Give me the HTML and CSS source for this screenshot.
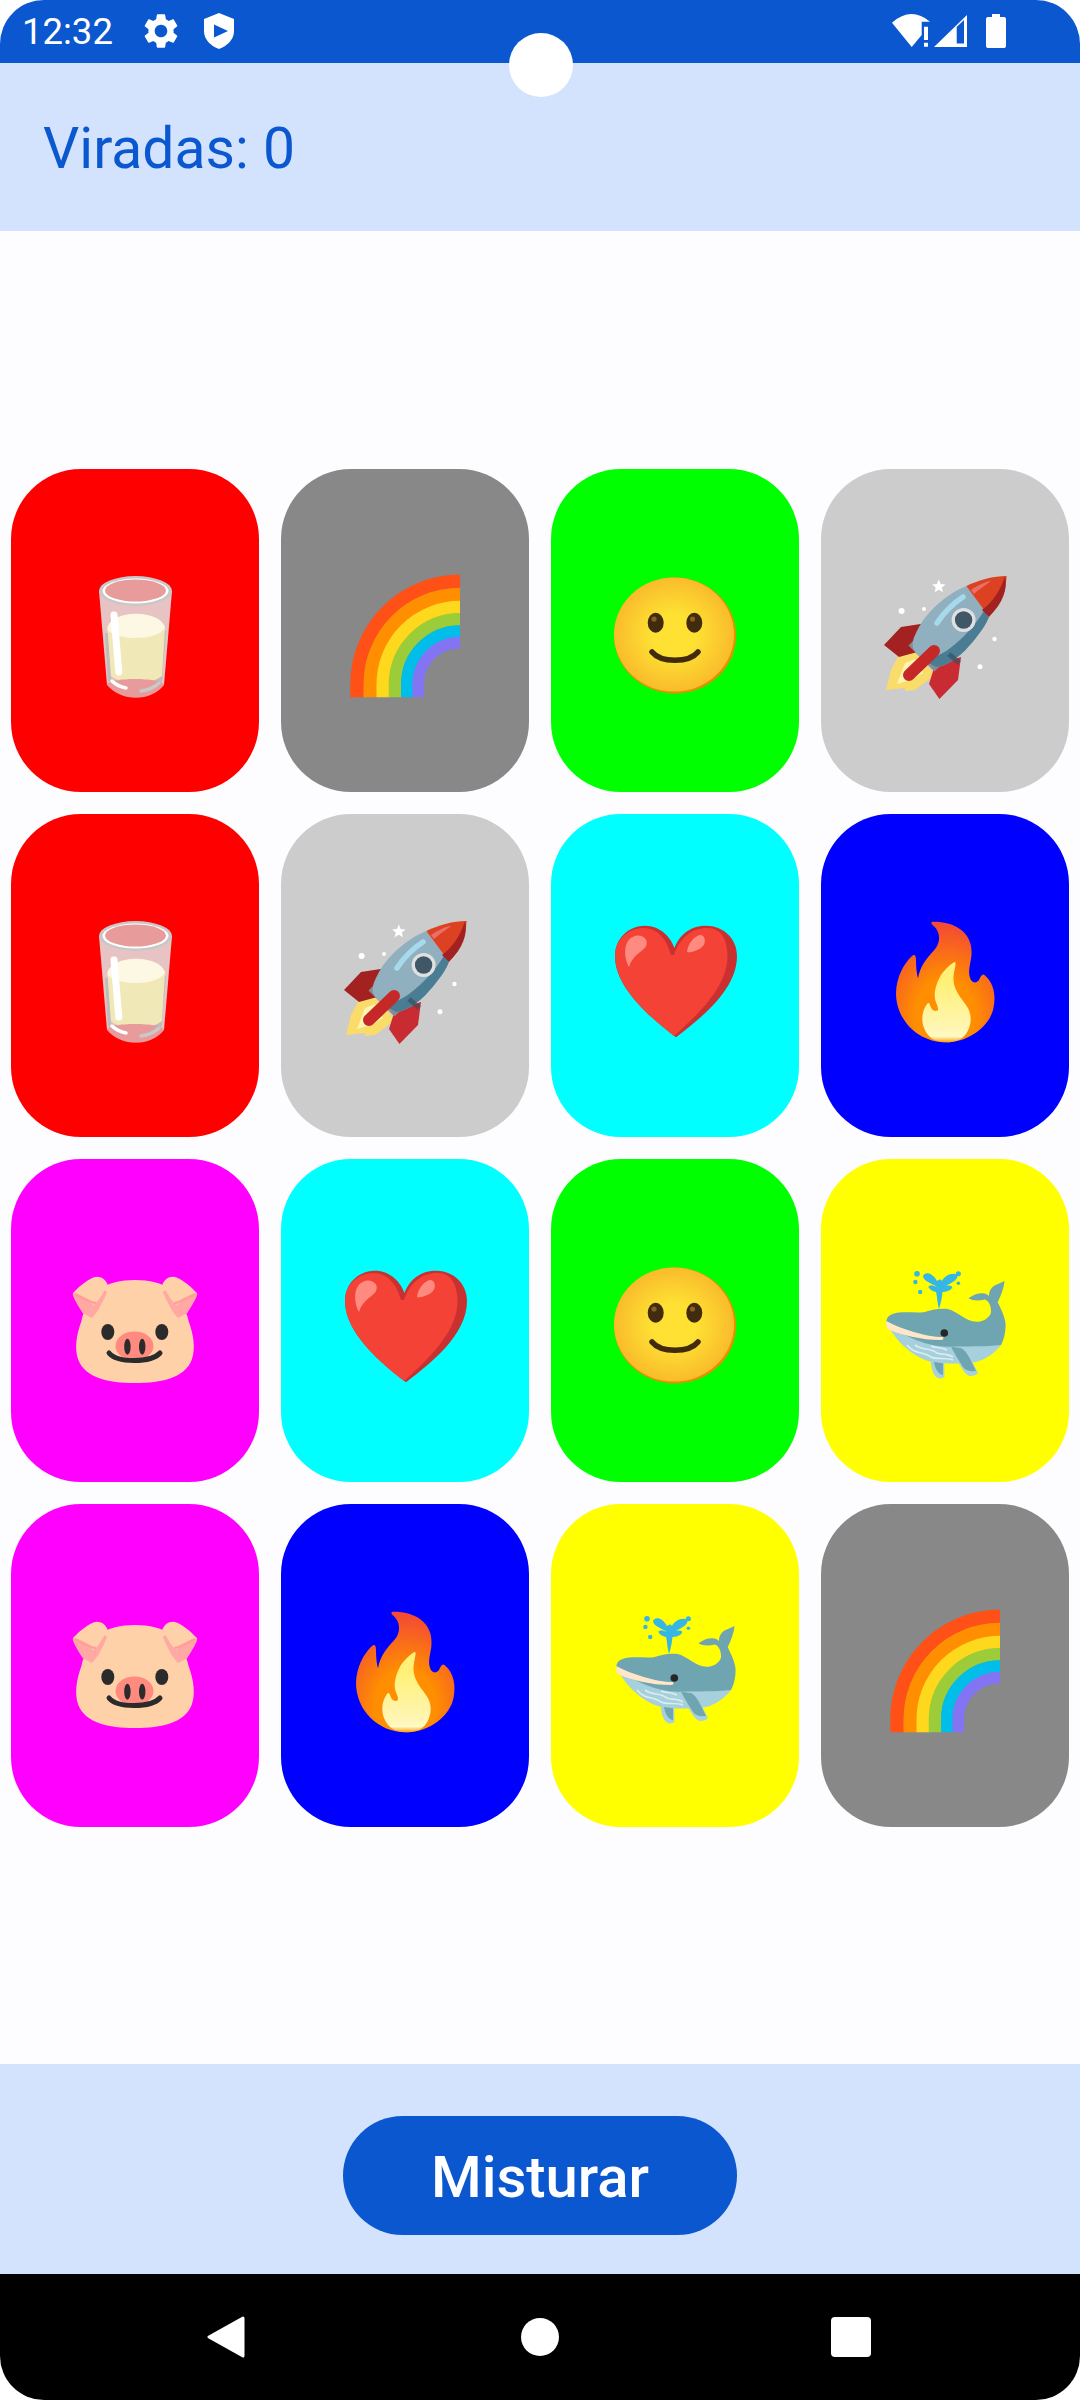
FILE: index.html
```html
<!DOCTYPE html>
<html lang="pt">

<head>
    <meta charset="UTF-8">
    <meta name="viewport" content="width=device-width, initial-scale=1.0">
    <title>Jogo da Memória</title>
    <link rel="stylesheet" href="styles.css">
</head>

<body>
    <div class="screen">
        <div class="statusBar">
            <span class="clock">12:32</span>
            <svg class="gear" viewBox="0 0 24 24"><path fill="#fff" d="M19.14 12.94c.04-.3.06-.61.06-.94 0-.32-.02-.64-.07-.94l2.03-1.58c.18-.14.23-.41.12-.61l-1.92-3.32c-.12-.22-.37-.29-.59-.22l-2.39.96c-.5-.38-1.03-.7-1.62-.94l-.36-2.54c-.04-.24-.24-.41-.48-.41h-3.84c-.24 0-.43.17-.47.41l-.36 2.54c-.59.24-1.13.57-1.62.94l-2.39-.96c-.22-.08-.47 0-.59.22L2.74 8.87c-.12.21-.08.47.12.61l2.03 1.58c-.05.3-.09.63-.09.94s.02.64.07.94l-2.03 1.58c-.18.14-.23.41-.12.61l1.92 3.32c.12.22.37.29.59.22l2.39-.96c.5.38 1.03.7 1.62.94l.36 2.54c.05.24.24.41.48.41h3.84c.24 0 .44-.17.47-.41l.36-2.54c.59-.24 1.13-.56 1.62-.94l2.39.96c.22.08.47 0 .59-.22l1.92-3.32c.12-.22.07-.47-.12-.61l-2.01-1.58zM12 15.6c-1.98 0-3.6-1.62-3.6-3.6s1.62-3.6 3.6-3.6 3.6 1.62 3.6 3.6-1.62 3.6-3.6 3.6z"/></svg>
            <svg class="shield" viewBox="0 0 30 36"><path fill="#fff" fill-rule="evenodd" d="M15 0 L30 6 V18 C30 27 23 33 15 36 C7 33 0 27 0 18 V6Z M10 11.5 V24.5 L24 18Z"/></svg>
            <div class="statusRight">
                <svg class="wifi" viewBox="0 0 38 33"><path fill="#fff" d="M19.7 33 L0 8.7 Q19 -8 38 7.7 H29.7 V21Z M32 12.7 H36 V26 H32Z M32 28.7 H36 V32.7 H32Z"/></svg>
                <svg class="signal" viewBox="0 0 33 32"><path fill="#fff" fill-rule="evenodd" d="M0 32 L33 0 V32Z M22.7 12 L30 5 V28.5 H22.7Z"/></svg>
                <svg class="battery" viewBox="0 0 20 34"><path fill="#fff" d="M6 0 H14 V3 H18 a2 2 0 0 1 2 2 V32 a2 2 0 0 1 -2 2 H2 a2 2 0 0 1 -2 -2 V5 a2 2 0 0 1 2 -2 H6Z"/></svg>
            </div>
        </div>

        <div class="camera"></div>

        <div class="topBar">Viradas: <span id="flips">0</span></div>

        <div class="board">
            <div class="card red"><svg class="emoji"><use href="#milk"/></svg></div>
            <div class="card gray"><svg class="emoji"><use href="#rainbow"/></svg></div>
            <div class="card green"><svg class="emoji"><use href="#smile"/></svg></div>
            <div class="card lightGray"><svg class="emoji"><use href="#rocket"/></svg></div>

            <div class="card red"><svg class="emoji"><use href="#milk"/></svg></div>
            <div class="card lightGray"><svg class="emoji"><use href="#rocket"/></svg></div>
            <div class="card cyan"><svg class="emoji"><use href="#heart"/></svg></div>
            <div class="card blue"><svg class="emoji"><use href="#fire"/></svg></div>

            <div class="card magenta"><svg class="emoji"><use href="#pig"/></svg></div>
            <div class="card cyan"><svg class="emoji"><use href="#heart"/></svg></div>
            <div class="card green"><svg class="emoji"><use href="#smile"/></svg></div>
            <div class="card yellow"><svg class="emoji"><use href="#whale"/></svg></div>

            <div class="card magenta"><svg class="emoji"><use href="#pig"/></svg></div>
            <div class="card blue"><svg class="emoji"><use href="#fire"/></svg></div>
            <div class="card yellow"><svg class="emoji"><use href="#whale"/></svg></div>
            <div class="card gray"><svg class="emoji"><use href="#rainbow"/></svg></div>
        </div>

        <div class="bottomBar">
            <button class="shuffle">Misturar</button>
        </div>

        <div class="navBar">
            <svg class="navBack" viewBox="0 0 38 42"><polygon fill="#fff" stroke="#fff" stroke-width="3" stroke-linejoin="round" points="36,2 2,21 36,40"/></svg>
            <div class="navHome"></div>
            <div class="navRecent"></div>
        </div>
    </div>

    <!-- emoji drawings, all on a 128 box -->
    <svg class="sprite">
        <defs>
            <radialGradient id="smileFill" cx="50%" cy="50%" r="52%">
                <stop offset="0.35" stop-color="#fee133"/>
                <stop offset="1" stop-color="#f9b92b"/>
            </radialGradient>
            <radialGradient id="fireFill" cx="50%" cy="78%" r="75%">
                <stop offset="0.4" stop-color="#ff8f00"/>
                <stop offset="1" stop-color="#f44b32"/>
            </radialGradient>
            <linearGradient id="fireInner" x1="0" y1="0" x2="0" y2="1">
                <stop offset="0.25" stop-color="#fff176"/>
                <stop offset="0.8" stop-color="#fff5b0"/>
                <stop offset="0.93" stop-color="#fff9c4"/>
                <stop offset="1" stop-color="#ff9800"/>
            </linearGradient>

            <symbol id="milk" viewBox="0 0 128 128">
                <path fill="#e8c3c3" d="M28 18 L36 112 H93 L101 18Z"/>
                <path fill="#bdbdbd" d="M34 60 L37 108 C48 116 80 116 91 108 L95 58 L92 58 L88 105 C78 112 50 112 40 105 L37 60Z"/>
                <path fill="#f1e8b8" d="M36.5 55 C40 38 90 38 94 55 L91 103 C80 112 50 112 40 103Z"/>
                <path fill="#fdf8e4" d="M36.5 55 C40 36 90 36 94 55 C85 68 48 68 36.5 57Z"/>
                <path fill="#e89b9b" d="M36 112 C36 104 92 104 93 112 C80 129 50 129 36 112Z"/>
                <path fill="none" stroke="#fff" stroke-width="3.5" stroke-linecap="round" d="M41 108 C45 112 50 114 55 115"/>
                <path fill="none" stroke="#c9c9c9" stroke-width="3.5" stroke-linecap="round" d="M70 118 C77 117 84 114 88 110"/>
                <ellipse cx="64.5" cy="18" rx="36.5" ry="15" fill="#c8c8c8"/>
                <ellipse cx="64.5" cy="18" rx="33" ry="12.5" fill="#fff"/>
                <ellipse cx="64.5" cy="17.5" rx="30.5" ry="11" fill="#e89b9b"/>
                <path fill="none" stroke="#fff" stroke-width="7" stroke-linecap="round" d="M43 42 L47.8 99"/>
            </symbol>

            <symbol id="rainbow" viewBox="0 0 128 128">
                <g fill="none">
                    <path stroke="#ff5117" stroke-width="13.5" d="M16 124.3 V111.3 A103 103 0 0 1 119 8.3"/>
                    <path stroke="#ff8f00" stroke-width="13.5" d="M29.3 124.3 V111.3 A89.7 89.7 0 0 1 119 21.6"/>
                    <path stroke="#fdd81c" stroke-width="13" d="M42 124.3 V111.3 A77 77 0 0 1 119 34.3"/>
                    <path stroke="#9ccc38" stroke-width="12.5" d="M54 124.3 V111.3 A65 65 0 0 1 119 46.3"/>
                    <path stroke="#00bde9" stroke-width="12" d="M66 124.3 V111.3 A53 53 0 0 1 119 58.3"/>
                    <path stroke="#8374f4" stroke-width="11.5" d="M77.2 124.3 V111.3 A41.8 41.8 0 0 1 119 69.5"/>
                </g>
            </symbol>

            <symbol id="smile" viewBox="0 0 128 128">
                <ellipse cx="64" cy="62.5" rx="61" ry="58" fill="#eb8f00"/>
                <ellipse cx="63" cy="61.5" rx="60" ry="57" fill="url(#smileFill)"/>
                <ellipse cx="44.7" cy="49.7" rx="8" ry="10" fill="#422b0d"/>
                <ellipse cx="83.3" cy="49.7" rx="8" ry="10" fill="#422b0d"/>
                <circle cx="43" cy="46" r="2.6" fill="#896024"/>
                <circle cx="81.5" cy="46" r="2.6" fill="#896024"/>
                <path fill="none" stroke="#422b0d" stroke-width="5.5" stroke-linecap="round" d="M41 79 C50 90 78 90 87 79"/>
            </symbol>

            <symbol id="rocket" viewBox="0 0 128 128">
                <g fill="#fff">
                    <path d="M57.8 6.5 L59.7 10.9 L64.5 11.4 L60.9 14.5 L62 19.2 L57.8 16.7 L53.6 19.2 L54.7 14.5 L51.1 11.4 L55.9 10.9Z"/>
                    <circle cx="20.6" cy="38" r="3"/>
                    <circle cx="43" cy="36" r="2"/>
                    <circle cx="113.5" cy="66" r="2.2"/>
                    <circle cx="99" cy="93.7" r="2.5"/>
                </g>
                <path fill="#fadc6b" d="M19 80 L10 97 L5 117 L24 115 L24 118 L34 117 L54 102 L36 80Z"/>
                <path fill="#fff3b0" d="M24 90 L16 111 L30 107 L42 100 L34 86Z"/>
                <path fill="#a32121" d="M46 50 L20 54 L3 72 L18 84 L40 78Z"/>
                <path fill="#c92b32" d="M80 84 L77 107 L58.4 126 L48 111 L54 92Z"/>
                <path fill="none" stroke="#8a8a8a" stroke-width="7" d="M30 70 L56 96"/>
                <path fill="#90afbf" d="M85.3 13 C68 20 48 36 38 54 C32 65 30 71 33 77 C38 85 47 91 55 94 C63 94 77 86 88 73 C98 62 106 50 108 43.7Z"/>
                <path fill="#4a7c93" d="M103 38 C94 52 82 66 68 76 C60 82 50 86 43 87 C47 90 51 92 55 94 C63 94 77 86 88 73 C98 62 106 50 108 43.7Z"/>
                <path fill="none" stroke="#37505e" stroke-width="5" d="M68 81 L78 90" opacity="0.7"/>
                <path fill="none" stroke="#a5daec" stroke-width="5.5" stroke-linecap="round" d="M56 50 C62 41 71 31 82 24"/>
                <path fill="#dc4122" d="M85.3 13 C98 7 112 3 125.6 3 C125 18 119 32 108 43.7Z"/>
                <path fill="#a32121" d="M124 3 C127 16 122 30 108 43.7 L101 37 C113 28 120 16 124 3Z"/>
                <path fill="#e9706a" d="M90 17 C97 12 106 8 110 8 C105 12 98 16 93 21Z"/>
                <circle cx="82.6" cy="47" r="12" fill="#e0e0e0"/>
                <circle cx="82.6" cy="47" r="8.7" fill="#3f5766"/>
                <path fill="none" stroke="#c62828" stroke-width="12" stroke-linecap="round" d="M53 78 L28 102"/>
            </symbol>

            <symbol id="heart" viewBox="0 0 128 128">
                <path fill="#c93131" d="M65 119.3 C40 100 4 70 4 38 C4 20 18 7.7 34 7.7 C50 7.7 60 20 63.5 30 C68 18 78 7.7 95 7.7 C112 7.7 126 20 126 38 C126 72 90 100 65 119.3Z"/>
                <path fill="#f44336" d="M63 118 C40 100 4 70 4 38 C4 21 18 10 32 10 C47 10 56 22 60 37 L63 37 C69 20 80 10 97 10 C110 10 116.5 22 116.5 38 C116.5 70 85 98 63 118Z"/>
                <path fill="#ff8a80" d="M18 49 C13 40 11 22 24 18 C32 16 38 22 35 28 C33 33 22 36 18 49Z"/>
                <path fill="#ff8a80" d="M76 34 C77 25 84 17 90 17 C95 18 95 26 91 29 C87 33 78 35 76 34Z"/>
            </symbol>

            <symbol id="fire" viewBox="0 0 128 128">
                <path fill="url(#fireFill)" d="M51.6 3.7 C70 3 93 12 90.4 38 C89.5 46 87 52 88.7 58.7 C90 65 95 66 98 62 C100 58 101.5 55 104 57.5 C113 65 115 78 112.5 90 C109 108 88 124.3 65 124.3 C37 124.3 15 102 15 75 C15 60 23 45 31 38 C34 35.5 35 38 35 42 C35 48 35.5 55 37 60.5 C39 48 46 40 53.3 32 C60 25 60 13 51 6.5 C50 5 50.5 3.7 51.6 3.7Z"/>
                <path fill="url(#fireInner)" d="M74 44 C76 45 72 55 72.5 62 C73 72 80 80 85 87 C90 94 91 102 88 110 C84 122 74 124.3 65 124.3 C55 124.3 47 120 43 110 C40 102 41 93 46 86 C47.5 84 48.5 85 49 87 C50 91 53 94 56.5 92.5 C58 91 56 87 54.5 83 C52 74 56 64 60 57 C64 51 72 44 74 44Z"/>
            </symbol>

            <symbol id="pig" viewBox="0 0 128 128">
                <g transform="translate(64 0) scale(1.03 1) translate(-64 0)">
                    <path fill="#ffa8a4" d="M4 30 L13.4 50 L22 55 C28 50 36 36 38 24 L30 15Z"/>
                    <path fill="#ffa8a4" d="M124 30 L114.6 50 L106 55 C100 50 92 36 90 24 L98 15Z"/>
                    <path fill="#ffd1a9" d="M64 17 C78 17 90 20 98 26 C106 36 114 46 116 58 C121 72 123 86 119 97 C112 115 90 120 64 120 C38 120 16 115 9 97 C5 86 7 72 12 58 C14 46 22 36 30 26 C38 20 50 17 64 17Z"/>
                    <path fill="#ffa8a4" d="M4 30 C2 31 8 42 13.4 50 L22 55 C28 50 33 38 37 29 L33 26 C30 32 27 40 24 42 C17 38 10 33 4 30Z"/>
                    <path fill="#ffa8a4" d="M124 30 C126 31 120 42 114.6 50 L106 55 C100 50 95 38 91 29 L95 26 C98 32 101 40 104 42 C111 38 118 33 124 30Z"/>
                    <path fill="#ffd1a9" d="M4 30 C8 25 20 14 27 13.7 C32 13.7 36 17 37.5 22 L34 28 C31 33 29 37 26 40 C18 36 10 31 4 30Z"/>
                    <path fill="#ffd1a9" d="M124 30 C120 25 108 14 101 13.7 C96 13.7 92 17 90.5 22 L94 28 C97 33 99 37 102 40 C110 36 118 31 124 30Z"/>
                    <path fill="none" stroke="#ff9e9a" stroke-width="2.5" d="M6 31 C13 35 20 40 26 40"/>
                    <path fill="none" stroke="#ff9e9a" stroke-width="2.5" d="M122 31 C115 35 108 40 102 40"/>
                </g>
                <ellipse cx="36.8" cy="69" rx="6.5" ry="8" fill="#2b2b2b"/>
                <ellipse cx="90.8" cy="69" rx="6.5" ry="8" fill="#2b2b2b"/>
                <ellipse cx="63.5" cy="83" rx="19" ry="14.5" fill="#ff8a80"/>
                <ellipse cx="56.4" cy="83.7" rx="3.2" ry="8" fill="#2b2b2b"/>
                <ellipse cx="71.2" cy="83.7" rx="3.2" ry="8" fill="#2b2b2b"/>
                <path fill="none" stroke="#2b2b2b" stroke-width="5" stroke-linecap="round" d="M38 90 C46 100 80 100 89 90"/>
            </symbol>

            <symbol id="whale" viewBox="0 0 128 128">
                <g fill="#35b6e4">
                    <path d="M58 46 C56 38 56 32 55 29 C50 28 46 24 48 23 C50 21 54 23 56 24 C52 21 42 18 42 13 C44 8 52 10 56 18 C58 16 60 16 61 18 C64 12 72 9 76.5 12 C78 17 68 21 63 24 C66 22 72 22 71 25 C69 28 64 29 61.5 29 C61 34 60 40 58 46Z"/>
                    <circle cx="36" cy="10.7" r="2.8"/>
                    <circle cx="34.4" cy="19" r="2.2"/>
                    <circle cx="39.2" cy="29" r="2.2"/>
                    <circle cx="77.4" cy="10.7" r="2.5"/>
                    <circle cx="77.4" cy="20.3" r="1.8"/>
                </g>
                <path fill="#a6d0dc" d="M6 60 C14 78 32 94 49.5 98.7 C60 101 80 101 94 99.3 C104 97 114 90 120 82 L100 70 L30 70Z"/>
                <path fill="#6fa5b1" d="M5.4 60 C5 55 8 52 11.6 51 C20 48 32 50 42.6 49.3 C50 47 58 45 66.7 46 C78 49 86 60 97.7 58.7 C104 58 110 53 110 48.7 C110 43 108 38 104 36.5 C98 38 92 38 87.4 35.3 C92 32 97 30 102 30.3 C104 30.5 106 31 108 33 C108 28 110 25 113 22.7 L123.6 18 C123 25 120 32 116.7 39.3 C120 46 124.6 55 124.6 62 C124.6 70 122.5 78 120 82 C105 84 85 83 70 83.7 C50 85 25 75 5.4 60Z"/>
                <path fill="#ffe6c9" d="M5.4 58 C20 66 45 74 62 74 C63 76 62 77 60 77 C40 77 20 72 6.5 66 C5 63 5 60 5.4 58Z"/>
                <circle cx="63.3" cy="70" r="3.8" fill="#262626"/>
                <g fill="none" stroke="#dcecf1" stroke-width="1.6">
                    <path d="M26 82 C34 92 42 88 50 94 C56 97 64 94 72 97"/>
                    <path d="M34 82 C42 88 48 84 56 90 C60 92 66 90 72 94"/>
                    <path d="M50 83 C54 85 60 84 66 87"/>
                </g>
                <path fill="#a6d0dc" d="M50 98.7 L63.3 100.3 L63.5 113.7 C62 115.5 58 116 56 114.5 C52 112 50 105 50 98.7Z"/>
                <path fill="#6fa5b1" d="M53 99 L62 100.3 L62 112 C58 112 54 106 53 99Z"/>
                <path fill="#a6d0dc" d="M70 83.7 L80.5 85.3 C86 88 92 100 96.7 109.3 C97 112 92 113.5 88 112.7 C83 111 77 100 70 83.7Z"/>
                <path fill="#6fa5b1" d="M70 83.7 L80.5 85.3 C86 88 91 100 95 108 C90 109 85 108 82 104 C78 98 74 91 70 83.7Z"/>
            </symbol>
        </defs>
    </svg>
</body>

</html>
```

FILE: styles.css
```css
* {
    box-sizing: border-box;
}

body {
    margin: 0;
    background-color: #ffffff;
    font-family: Roboto, sans-serif;
}

.screen {
    position: relative;
    width: 1080px;
    height: 2400px;
    display: flex;
    flex-direction: column;
    background-color: #fdfcff;
    border-radius: 44px;
    overflow: hidden;
}

.sprite {
    display: block;
    width: 0;
    height: 0;
}

/* status bar */
.statusBar {
    height: 63px;
    flex-shrink: 0;
    display: flex;
    align-items: center;
    padding: 0 74px 2px 22px;
    background-color: #0b57d0;
    color: #ffffff;
}

.clock {
    font-size: 36.5px;
    line-height: 1;
    padding-top: 4px;
}

.gear {
    width: 42px;
    height: 42px;
    margin-left: 27px;
}

.shield {
    width: 30px;
    height: 36px;
    margin-left: 22px;
}

.statusRight {
    margin-left: auto;
    display: flex;
    align-items: center;
}

.wifi {
    width: 38px;
    height: 33px;
}

.signal {
    width: 33px;
    height: 32px;
    margin-left: 4px;
}

.battery {
    width: 20px;
    height: 34px;
    margin-left: 19px;
}

.camera {
    position: absolute;
    top: 33px;
    left: 509px;
    width: 64px;
    height: 64px;
    border-radius: 50%;
    background-color: #ffffff;
}

/* top bar */
.topBar {
    height: 168px;
    flex-shrink: 0;
    display: flex;
    align-items: center;
    gap: 0.25em;
    padding: 3px 0 0 43px;
    background-color: #d3e3fd;
    color: #0b57d0;
    font-size: 57px;
}

/* cards */
.board {
    flex: 1;
    display: grid;
    grid-template-columns: repeat(4, 248px);
    grid-auto-rows: 323px;
    gap: 22px;
    align-content: center;
    padding: 0 11px;
}

.card {
    display: flex;
    justify-content: center;
    align-items: center;
    padding-top: 13px;
    border-radius: 70px;
}

.emoji {
    width: 128px;
    height: 128px;
}

.red {
    background-color: #ff0000;
}

.gray {
    background-color: #888888;
}

.green {
    background-color: #00ff00;
}

.lightGray {
    background-color: #cccccc;
}

.cyan {
    background-color: #00ffff;
}

.blue {
    background-color: #0000ff;
}

.magenta {
    background-color: #ff00ff;
}

.yellow {
    background-color: #ffff00;
}

/* bottom bar */
.bottomBar {
    height: 210px;
    flex-shrink: 0;
    display: flex;
    justify-content: center;
    padding-top: 52px;
    background-color: #d3e3fd;
}

.shuffle {
    width: 394px;
    height: 119px;
    padding-top: 3px;
    border: none;
    border-radius: 60px;
    background-color: #0b57d0;
    color: #ffffff;
    font-family: inherit;
    font-size: 58px;
    font-weight: 500;
}

/* navigation */
.navBar {
    height: 126px;
    flex-shrink: 0;
    display: flex;
    align-items: center;
    padding-left: 207px;
    background-color: #000000;
}

.navBack {
    width: 38px;
    height: 42px;
}

.navHome {
    width: 38px;
    height: 38px;
    margin-left: 276px;
    border-radius: 50%;
    background-color: #ffffff;
}

.navRecent {
    width: 40px;
    height: 40px;
    margin-left: 272px;
    border-radius: 4px;
    background-color: #ffffff;
}
```
